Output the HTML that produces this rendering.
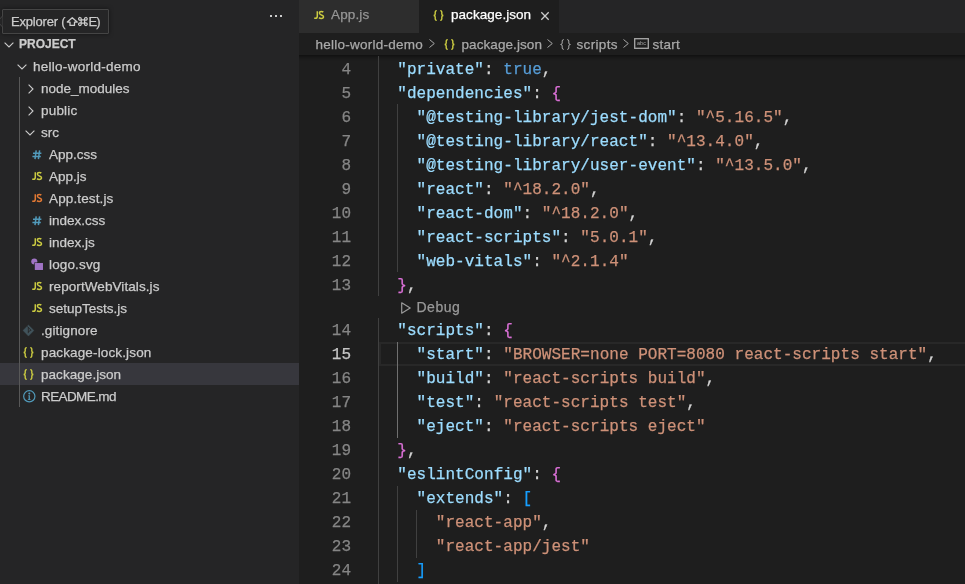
<!DOCTYPE html>
<html><head><meta charset="utf-8">
<style>
*{margin:0;padding:0;box-sizing:border-box}
html,body{width:965px;height:584px;overflow:hidden;background:#1e1e1e}
body{position:relative;font-family:"Liberation Sans",sans-serif;}
.lbl,.tl,.cl,.code,.ln,.tt{-webkit-text-stroke:0.25px currentColor}
.a{position:absolute}
svg{position:absolute;overflow:visible}
#side{will-change:transform;position:absolute;left:0;top:0;width:299px;height:584px;background:#252526}
.row{position:absolute;left:0;width:299px;height:22px}
.lbl{position:absolute;top:0;height:22px;line-height:22px;font-size:13.5px;color:#cccccc;white-space:nowrap}
.sel{background:#37373d}
.guide{position:absolute;width:1px;background:#585858}
#tabs{will-change:transform;position:absolute;left:299px;top:0;width:666px;height:33px;background:#252526}
.tab{position:absolute;top:0;height:33px;white-space:nowrap}
.tl{position:absolute;top:0;height:33px;line-height:33px;font-size:13.5px;white-space:nowrap}
#crumbs{will-change:transform;position:absolute;left:299px;top:33px;width:666px;height:22px;background:#1e1e1e}
.cl{position:absolute;top:1px;height:22px;line-height:22px;font-size:13.5px;color:#a9a9a9;white-space:nowrap}
#shadow{position:absolute;left:299px;top:55px;width:666px;height:6px;background:linear-gradient(rgba(0,0,0,0.45),rgba(0,0,0,0.12) 50%,rgba(0,0,0,0))}
#ed{will-change:transform;position:absolute;left:299px;top:55px;width:666px;height:529px;overflow:hidden;font-family:"Liberation Mono",monospace;font-size:16px}
.ln{position:absolute;left:0;width:52px;text-align:right;height:24px;line-height:24px;color:#858585}
.ln.act{color:#c6c6c6}
.code{position:absolute;left:79px;height:24px;line-height:24px;white-space:pre;color:#d4d4d4;letter-spacing:0.033px}
.k{color:#9cdcfe}.s{color:#ce9178}.b{color:#569cd6}.p1{color:#da70d6}.p2{color:#179fff}
.ig{position:absolute;width:1px;background:#404040}
.ig.act{background:#707070}
</style></head><body>
<div id="side">
<div class="a" style="left:270px;top:15px;width:2px;height:2px;background:#cccccc"></div>
<div class="a" style="left:275px;top:15px;width:2px;height:2px;background:#cccccc"></div>
<div class="a" style="left:280px;top:15px;width:2px;height:2px;background:#cccccc"></div>
<div class="a" style="left:2px;top:9px;width:107px;height:25px;background:#252526;border:1px solid #454545;border-radius:1px;box-shadow:0 0 4px rgba(0,0,0,0.5)"></div>
<svg style="left:-3px;top:16px" width="6" height="11" viewBox="0 0 6 11"><path d="M5.5 0 L0.5 5.5 L5.5 11" fill="#252526" stroke="#454545" stroke-width="1"/></svg>
<div class="a tt" style="left:11px;top:9px;height:25px;line-height:25px;font-size:13px;letter-spacing:-0.2px;color:#cccccc;white-space:nowrap">Explorer (</div>
<svg style="left:66.5px;top:17px" width="11" height="9" viewBox="0 0 11 9"><path d="M5.25 0.7 L10.2 5.1 H7.5 V8.4 H3.0 V5.1 H0.3 Z" fill="none" stroke="#cccccc" stroke-width="1.3" stroke-linejoin="round"/></svg>
<svg style="left:78px;top:17px" width="10" height="9" viewBox="0 0 10 9"><path d="M3.2 2.9 H6.6 V6.1 H3.2 Z M3.2 2.9 V1.9 A1.3 1.3 0 1 0 1.9 3.1 H3.2 M6.6 2.9 V1.9 A1.3 1.3 0 1 1 7.9 3.1 H6.6 M3.2 6.1 V7.1 A1.3 1.3 0 1 1 1.9 5.9 H3.2 M6.6 6.1 V7.1 A1.3 1.3 0 1 0 7.9 5.9 H6.6" fill="none" stroke="#cccccc" stroke-width="1.25"/></svg>
<div class="a tt" style="left:88.5px;top:9px;height:25px;line-height:25px;font-size:13px;letter-spacing:-0.9px;color:#cccccc;white-space:nowrap">E)</div>
<svg style="left:3.7px;top:42px" width="10" height="6" viewBox="0 0 10 6"><path d="M0.6 0.6 L5 5 L9.4 0.6" fill="none" stroke="#cccccc" stroke-width="1.1"/></svg>
<div class="lbl" style="top:33px;left:19px;font-size:12px;font-weight:bold">PROJECT</div>
<div class="row sel" style="top:363px"></div>
<div class="guide" style="left:19px;top:77px;height:330px"></div>
<div class="lbl" style="top:56px;left:33px;letter-spacing:0.27px">hello-world-demo</div>
<svg style="left:16.7px;top:64px" width="10" height="6" viewBox="0 0 10 6"><path d="M0.6 0.6 L5 5 L9.4 0.6" fill="none" stroke="#cccccc" stroke-width="1.1"/></svg>
<div class="lbl" style="top:78px;left:41px;letter-spacing:0px">node_modules</div>
<svg style="left:27.5px;top:84px" width="6" height="10" viewBox="0 0 6 10"><path d="M0.6 0.6 L5 5 L0.6 9.4" fill="none" stroke="#cccccc" stroke-width="1.1"/></svg>
<div class="lbl" style="top:100px;left:41px;letter-spacing:0.2px">public</div>
<svg style="left:27.5px;top:106px" width="6" height="10" viewBox="0 0 6 10"><path d="M0.6 0.6 L5 5 L0.6 9.4" fill="none" stroke="#cccccc" stroke-width="1.1"/></svg>
<div class="lbl" style="top:122px;left:41px;letter-spacing:0px">src</div>
<svg style="left:24.6px;top:130px" width="10" height="6" viewBox="0 0 10 6"><path d="M0.6 0.6 L5 5 L9.4 0.6" fill="none" stroke="#cccccc" stroke-width="1.1"/></svg>
<div class="lbl" style="top:144px;left:49px;letter-spacing:0px">App.css</div>
<svg style="left:32px;top:149.5px" width="10" height="10" viewBox="0 0 10 10"><path d="M4.2 0.4 L3.0 9.2 M7.6 0.4 L6.4 9.2 M1.0 3.2 H9.4 M0.4 6.4 H8.8" fill="none" stroke="#519aba" stroke-width="1.5"/></svg>
<div class="lbl" style="top:166px;left:49px;letter-spacing:0px">App.js</div>
<svg style="left:32px;top:172.3px" width="10" height="8" viewBox="0 0 10 8"><path d="M3.3 0.3 V5.2 Q3.3 7.3 1.2 7.3 H0.2" fill="none" stroke="#cbcb41" stroke-width="1.5"/><path d="M9.3 1.1 Q8.6 0.4 7.3 0.4 Q5.4 0.4 5.4 2.1 Q5.4 3.4 7.4 3.9 Q9.5 4.4 9.5 5.8 Q9.5 7.4 7.3 7.4 Q5.8 7.4 5.0 6.6" fill="none" stroke="#cbcb41" stroke-width="1.5"/></svg>
<div class="lbl" style="top:188px;left:49px;letter-spacing:0.13px">App.test.js</div>
<svg style="left:32px;top:194.3px" width="10" height="8" viewBox="0 0 10 8"><path d="M3.3 0.3 V5.2 Q3.3 7.3 1.2 7.3 H0.2" fill="none" stroke="#e37933" stroke-width="1.5"/><path d="M9.3 1.1 Q8.6 0.4 7.3 0.4 Q5.4 0.4 5.4 2.1 Q5.4 3.4 7.4 3.9 Q9.5 4.4 9.5 5.8 Q9.5 7.4 7.3 7.4 Q5.8 7.4 5.0 6.6" fill="none" stroke="#e37933" stroke-width="1.5"/></svg>
<div class="lbl" style="top:210px;left:49px;letter-spacing:0px">index.css</div>
<svg style="left:32px;top:215.5px" width="10" height="10" viewBox="0 0 10 10"><path d="M4.2 0.4 L3.0 9.2 M7.6 0.4 L6.4 9.2 M1.0 3.2 H9.4 M0.4 6.4 H8.8" fill="none" stroke="#519aba" stroke-width="1.5"/></svg>
<div class="lbl" style="top:232px;left:49px;letter-spacing:0px">index.js</div>
<svg style="left:32px;top:238.3px" width="10" height="8" viewBox="0 0 10 8"><path d="M3.3 0.3 V5.2 Q3.3 7.3 1.2 7.3 H0.2" fill="none" stroke="#cbcb41" stroke-width="1.5"/><path d="M9.3 1.1 Q8.6 0.4 7.3 0.4 Q5.4 0.4 5.4 2.1 Q5.4 3.4 7.4 3.9 Q9.5 4.4 9.5 5.8 Q9.5 7.4 7.3 7.4 Q5.8 7.4 5.0 6.6" fill="none" stroke="#cbcb41" stroke-width="1.5"/></svg>
<div class="lbl" style="top:254px;left:49px;letter-spacing:0.15px">logo.svg</div>
<svg style="left:31px;top:258px" width="13" height="13" viewBox="0 0 13 13"><circle cx="3.3" cy="3.5" r="3.05" fill="#a074c4"/><rect x="3.9" y="5.1" width="8.0" height="6.8" fill="#a074c4" stroke="#252526" stroke-width="1.3" paint-order="stroke"/><rect x="3.9" y="5.1" width="8.0" height="6.8" fill="#a074c4"/></svg>
<div class="lbl" style="top:276px;left:49px;letter-spacing:0.08px">reportWebVitals.js</div>
<svg style="left:32px;top:282.3px" width="10" height="8" viewBox="0 0 10 8"><path d="M3.3 0.3 V5.2 Q3.3 7.3 1.2 7.3 H0.2" fill="none" stroke="#cbcb41" stroke-width="1.5"/><path d="M9.3 1.1 Q8.6 0.4 7.3 0.4 Q5.4 0.4 5.4 2.1 Q5.4 3.4 7.4 3.9 Q9.5 4.4 9.5 5.8 Q9.5 7.4 7.3 7.4 Q5.8 7.4 5.0 6.6" fill="none" stroke="#cbcb41" stroke-width="1.5"/></svg>
<div class="lbl" style="top:298px;left:49px;letter-spacing:0px">setupTests.js</div>
<svg style="left:32px;top:304.3px" width="10" height="8" viewBox="0 0 10 8"><path d="M3.3 0.3 V5.2 Q3.3 7.3 1.2 7.3 H0.2" fill="none" stroke="#cbcb41" stroke-width="1.5"/><path d="M9.3 1.1 Q8.6 0.4 7.3 0.4 Q5.4 0.4 5.4 2.1 Q5.4 3.4 7.4 3.9 Q9.5 4.4 9.5 5.8 Q9.5 7.4 7.3 7.4 Q5.8 7.4 5.0 6.6" fill="none" stroke="#cbcb41" stroke-width="1.5"/></svg>
<div class="lbl" style="top:320px;left:41px;letter-spacing:0.12px">.gitignore</div>
<svg style="left:23.2px;top:324.8px" width="12" height="12" viewBox="0 0 12 12"><path d="M5.45 0.1 L10.9 5.4 L5.45 11.1 L0 5.4 Z" fill="#41535b" stroke="#41535b" stroke-width="0.4" stroke-linejoin="round"/><path d="M4.2 1.3 L8.1 5.3 L5.4 6.6 M5.3 2.4 V8.1" fill="none" stroke="#252526" stroke-width="0.85"/></svg>
<div class="lbl" style="top:342px;left:41px;letter-spacing:0.14px">package-lock.json</div>
<svg style="left:23px;top:346.8px" width="11" height="11" viewBox="0 0 11 11"><path d="M3.8 0.6 Q2.2 0.6 2.2 2.0 V4.0 Q2.2 5.5 0.6 5.5 Q2.2 5.5 2.2 7.0 V9.0 Q2.2 10.4 3.8 10.4" fill="none" stroke="#cbcb41" stroke-width="1.4"/><path d="M7.2 0.6 Q8.8 0.6 8.8 2.0 V4.0 Q8.8 5.5 10.4 5.5 Q8.8 5.5 8.8 7.0 V9.0 Q8.8 10.4 7.2 10.4" fill="none" stroke="#cbcb41" stroke-width="1.4"/></svg>
<div class="lbl" style="top:364px;left:41px;letter-spacing:0.05px">package.json</div>
<svg style="left:23px;top:368.8px" width="11" height="11" viewBox="0 0 11 11"><path d="M3.8 0.6 Q2.2 0.6 2.2 2.0 V4.0 Q2.2 5.5 0.6 5.5 Q2.2 5.5 2.2 7.0 V9.0 Q2.2 10.4 3.8 10.4" fill="none" stroke="#cbcb41" stroke-width="1.4"/><path d="M7.2 0.6 Q8.8 0.6 8.8 2.0 V4.0 Q8.8 5.5 10.4 5.5 Q8.8 5.5 8.8 7.0 V9.0 Q8.8 10.4 7.2 10.4" fill="none" stroke="#cbcb41" stroke-width="1.4"/></svg>
<div class="lbl" style="top:386px;left:41px;letter-spacing:-0.6px">README.md</div>
<svg style="left:22.6px;top:390.2px" width="13" height="13" viewBox="0 0 13 13"><circle cx="6.3" cy="6.3" r="5.65" fill="none" stroke="#519aba" stroke-width="1.2"/><circle cx="6.3" cy="3.5" r="1.0" fill="#519aba"/><path d="M5.3 5.2 H6.9 V9.2 H7.6 V10 H4.9 V9.2 H5.6 V6 H5.3 Z" fill="#519aba"/></svg>
</div>
<div id="tabs">
<div class="tab" style="left:0;width:120px;background:#2d2d2d"></div>
<svg style="left:14.5px;top:11.2px" width="10" height="8" viewBox="0 0 10 8"><path d="M3.3 0.3 V5.2 Q3.3 7.3 1.2 7.3 H0.2" fill="none" stroke="#cbcb41" stroke-width="1.5"/><path d="M9.3 1.1 Q8.6 0.4 7.3 0.4 Q5.4 0.4 5.4 2.1 Q5.4 3.4 7.4 3.9 Q9.5 4.4 9.5 5.8 Q9.5 7.4 7.3 7.4 Q5.8 7.4 5.0 6.6" fill="none" stroke="#cbcb41" stroke-width="1.5"/></svg>
<div class="tl" style="left:32px;top:-2px;color:#969696;letter-spacing:0.15px">App.js</div>
<div class="tab" style="left:120px;width:140px;background:#1e1e1e"></div>
<svg style="left:134px;top:10px" width="11" height="11" viewBox="0 0 11 11"><path d="M3.8 0.6 Q2.2 0.6 2.2 2.0 V4.0 Q2.2 5.5 0.6 5.5 Q2.2 5.5 2.2 7.0 V9.0 Q2.2 10.4 3.8 10.4" fill="none" stroke="#cbcb41" stroke-width="1.4"/><path d="M7.2 0.6 Q8.8 0.6 8.8 2.0 V4.0 Q8.8 5.5 10.4 5.5 Q8.8 5.5 8.8 7.0 V9.0 Q8.8 10.4 7.2 10.4" fill="none" stroke="#cbcb41" stroke-width="1.4"/></svg>
<div class="tl" style="left:152px;top:-2px;color:#ffffff;letter-spacing:0.05px">package.json</div>
<svg style="left:242px;top:12px" width="8" height="8" viewBox="0 0 8 8"><path d="M0.3 0.3 L7.7 7.7 M7.7 0.3 L0.3 7.7" stroke="#cccccc" stroke-width="1.3"/></svg>
</div>
<div id="crumbs">
<div class="cl" style="left:16.5px;letter-spacing:0.25px">hello-world-demo</div>
<svg style="left:130px;top:6.2px" width="6" height="9" viewBox="0 0 6 9"><path d="M0.5 0.5 L5.3 4.5 L0.5 8.5" fill="none" stroke="#a9a9a9" stroke-width="1.0"/></svg>
<svg style="left:144.5px;top:6px" width="11" height="11" viewBox="0 0 11 11"><path d="M3.8 0.6 Q2.2 0.6 2.2 2.0 V4.0 Q2.2 5.5 0.6 5.5 Q2.2 5.5 2.2 7.0 V9.0 Q2.2 10.4 3.8 10.4" fill="none" stroke="#cbcb41" stroke-width="1.4"/><path d="M7.2 0.6 Q8.8 0.6 8.8 2.0 V4.0 Q8.8 5.5 10.4 5.5 Q8.8 5.5 8.8 7.0 V9.0 Q8.8 10.4 7.2 10.4" fill="none" stroke="#cbcb41" stroke-width="1.4"/></svg>
<div class="cl" style="left:162.5px;letter-spacing:0.08px">package.json</div>
<svg style="left:248px;top:6.2px" width="6" height="9" viewBox="0 0 6 9"><path d="M0.5 0.5 L5.3 4.5 L0.5 8.5" fill="none" stroke="#a9a9a9" stroke-width="1.0"/></svg>
<svg style="left:260.5px;top:6px" width="11" height="11" viewBox="0 0 11 11"><path d="M3.8 0.6 Q2.2 0.6 2.2 2.0 V4.0 Q2.2 5.5 0.6 5.5 Q2.2 5.5 2.2 7.0 V9.0 Q2.2 10.4 3.8 10.4" fill="none" stroke="#a9a9a9" stroke-width="1.0"/><path d="M7.2 0.6 Q8.8 0.6 8.8 2.0 V4.0 Q8.8 5.5 10.4 5.5 Q8.8 5.5 8.8 7.0 V9.0 Q8.8 10.4 7.2 10.4" fill="none" stroke="#a9a9a9" stroke-width="1.0"/></svg>
<div class="cl" style="left:277.5px;letter-spacing:0.33px">scripts</div>
<svg style="left:324px;top:6.2px" width="6" height="9" viewBox="0 0 6 9"><path d="M0.5 0.5 L5.3 4.5 L0.5 8.5" fill="none" stroke="#a9a9a9" stroke-width="1.0"/></svg>
<svg style="left:335px;top:5px" width="15" height="11" viewBox="0 0 15 11"><rect x="0.7" y="0.7" width="13.6" height="9.6" fill="none" stroke="#a9a9a9" stroke-width="1.3"/><text x="7.5" y="7" font-family="Liberation Sans" font-size="5.5" fill="#a9a9a9" text-anchor="middle">abc</text></svg>
<div class="cl" style="left:353.5px;letter-spacing:0.25px">start</div>
</div>
<div id="shadow"></div>
<div id="ed">
<div class="a" style="left:80px;top:287px;width:621px;height:24px;border:2px solid #282828"></div>
<div class="ig" style="left:79px;top:1px;height:24px"></div>
<div class="ig" style="left:79px;top:25px;height:24px"></div>
<div class="ig" style="left:79px;top:49px;height:24px"></div>
<div class="ig" style="left:98px;top:49px;height:24px"></div>
<div class="ig" style="left:79px;top:73px;height:24px"></div>
<div class="ig" style="left:98px;top:73px;height:24px"></div>
<div class="ig" style="left:79px;top:97px;height:24px"></div>
<div class="ig" style="left:98px;top:97px;height:24px"></div>
<div class="ig" style="left:79px;top:121px;height:24px"></div>
<div class="ig" style="left:98px;top:121px;height:24px"></div>
<div class="ig" style="left:79px;top:145px;height:24px"></div>
<div class="ig" style="left:98px;top:145px;height:24px"></div>
<div class="ig" style="left:79px;top:169px;height:24px"></div>
<div class="ig" style="left:98px;top:169px;height:24px"></div>
<div class="ig" style="left:79px;top:193px;height:24px"></div>
<div class="ig" style="left:98px;top:193px;height:24px"></div>
<div class="ig" style="left:79px;top:217px;height:24px"></div>
<div class="ig" style="left:79px;top:263px;height:24px"></div>
<div class="ig" style="left:79px;top:287px;height:24px"></div>
<div class="ig act" style="left:98px;top:287px;height:24px"></div>
<div class="ig" style="left:79px;top:311px;height:24px"></div>
<div class="ig act" style="left:98px;top:311px;height:24px"></div>
<div class="ig" style="left:79px;top:335px;height:24px"></div>
<div class="ig act" style="left:98px;top:335px;height:24px"></div>
<div class="ig" style="left:79px;top:359px;height:24px"></div>
<div class="ig act" style="left:98px;top:359px;height:24px"></div>
<div class="ig" style="left:79px;top:383px;height:24px"></div>
<div class="ig" style="left:79px;top:407px;height:24px"></div>
<div class="ig" style="left:79px;top:431px;height:24px"></div>
<div class="ig" style="left:98px;top:431px;height:24px"></div>
<div class="ig" style="left:79px;top:455px;height:24px"></div>
<div class="ig" style="left:98px;top:455px;height:24px"></div>
<div class="ig" style="left:117px;top:455px;height:24px"></div>
<div class="ig" style="left:79px;top:479px;height:24px"></div>
<div class="ig" style="left:98px;top:479px;height:24px"></div>
<div class="ig" style="left:117px;top:479px;height:24px"></div>
<div class="ig" style="left:79px;top:503px;height:24px"></div>
<div class="ig" style="left:98px;top:503px;height:24px"></div>
<div class="ig" style="left:79px;top:527px;height:24px"></div>
<div class="ln" style="top:3px">4</div>
<div class="code" style="top:3px">  <span class="k">"private"</span>: <span class="b">true</span>,</div>
<div class="ln" style="top:27px">5</div>
<div class="code" style="top:27px">  <span class="k">"dependencies"</span>: <span class="p1">{</span></div>
<div class="ln" style="top:51px">6</div>
<div class="code" style="top:51px">    <span class="k">"@testing-library/jest-dom"</span>: <span class="s">"^5.16.5"</span>,</div>
<div class="ln" style="top:75px">7</div>
<div class="code" style="top:75px">    <span class="k">"@testing-library/react"</span>: <span class="s">"^13.4.0"</span>,</div>
<div class="ln" style="top:99px">8</div>
<div class="code" style="top:99px">    <span class="k">"@testing-library/user-event"</span>: <span class="s">"^13.5.0"</span>,</div>
<div class="ln" style="top:123px">9</div>
<div class="code" style="top:123px">    <span class="k">"react"</span>: <span class="s">"^18.2.0"</span>,</div>
<div class="ln" style="top:147px">10</div>
<div class="code" style="top:147px">    <span class="k">"react-dom"</span>: <span class="s">"^18.2.0"</span>,</div>
<div class="ln" style="top:171px">11</div>
<div class="code" style="top:171px">    <span class="k">"react-scripts"</span>: <span class="s">"5.0.1"</span>,</div>
<div class="ln" style="top:195px">12</div>
<div class="code" style="top:195px">    <span class="k">"web-vitals"</span>: <span class="s">"^2.1.4"</span></div>
<div class="ln" style="top:219px">13</div>
<div class="code" style="top:219px">  <span class="p1">}</span>,</div>
<div class="ln" style="top:264px">14</div>
<div class="code" style="top:264px">  <span class="k">"scripts"</span>: <span class="p1">{</span></div>
<div class="ln act" style="top:288px">15</div>
<div class="code" style="top:288px">    <span class="k">"start"</span>: <span class="s">"BROWSER=none PORT=8080 react-scripts start"</span>,</div>
<div class="ln" style="top:312px">16</div>
<div class="code" style="top:312px">    <span class="k">"build"</span>: <span class="s">"react-scripts build"</span>,</div>
<div class="ln" style="top:336px">17</div>
<div class="code" style="top:336px">    <span class="k">"test"</span>: <span class="s">"react-scripts test"</span>,</div>
<div class="ln" style="top:360px">18</div>
<div class="code" style="top:360px">    <span class="k">"eject"</span>: <span class="s">"react-scripts eject"</span></div>
<div class="ln" style="top:384px">19</div>
<div class="code" style="top:384px">  <span class="p1">}</span>,</div>
<div class="ln" style="top:408px">20</div>
<div class="code" style="top:408px">  <span class="k">"eslintConfig"</span>: <span class="p1">{</span></div>
<div class="ln" style="top:432px">21</div>
<div class="code" style="top:432px">    <span class="k">"extends"</span>: <span class="p2">[</span></div>
<div class="ln" style="top:456px">22</div>
<div class="code" style="top:456px">      <span class="s">"react-app"</span>,</div>
<div class="ln" style="top:480px">23</div>
<div class="code" style="top:480px">      <span class="s">"react-app/jest"</span></div>
<div class="ln" style="top:504px">24</div>
<div class="code" style="top:504px">    <span class="p2">]</span></div>
<div class="ln" style="top:528px">25</div>
<div class="code" style="top:528px">  <span class="p1">}</span></div>
<svg style="left:101.5px;top:246.5px" width="10" height="12" viewBox="0 0 10 12"><path d="M0.7 0.8 L9.2 6 L0.7 11.2 Z" fill="none" stroke="#999999" stroke-width="1.2" stroke-linejoin="round"/></svg>
<div class="a tt" style="left:117.5px;top:241px;height:22px;line-height:22px;font-family:'Liberation Sans',sans-serif;font-size:14px;letter-spacing:0.5px;color:#999999">Debug</div>
</div>
</body></html>
